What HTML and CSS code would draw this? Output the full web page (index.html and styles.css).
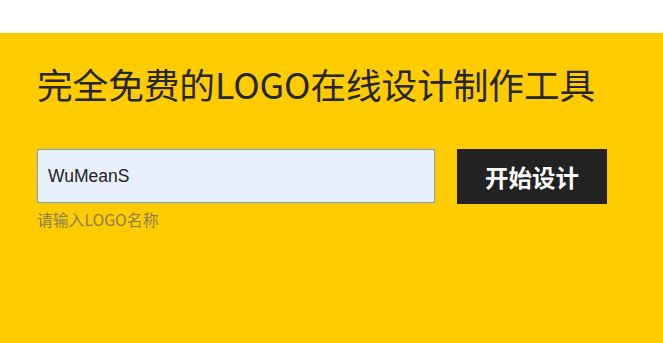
FILE: index.html
```html
<!DOCTYPE html>
<html lang="zh-CN">
<head>
<meta charset="utf-8">
<title>LOGO设计</title>
<link rel="stylesheet" href="styles.css">
</head>
<body>
<div class="topbar"></div>
<section class="hero">
  <h1 class="title">完全免费的LOGO在线设计制作工具</h1>
  <div class="form-row">
    <div class="field">
      <input class="name-input" type="text" value="WuMeanS">
      <div class="hint">请输入LOGO名称</div>
    </div>
    <button class="start-btn" type="button">开始设计</button>
  </div>
</section>
</body>
</html>
```

FILE: styles.css
```css
html, body {
  margin: 0;
  padding: 0;
  background: #ffffff;
  font-family: "Noto Sans CJK SC", "Noto Sans", sans-serif;
}
.topbar {
  height: 33px;
  background: #ffffff;
}
.hero {
  background: #ffcc00;
  height: 310px;
  padding: 29px 0 0 37px;
  box-sizing: border-box;
}
.title {
  margin: 0;
  font-size: 35.7px;
  line-height: 43px;
  font-weight: 400;
  color: #262626;
  letter-spacing: -0.1px;
}
.form-row {
  display: flex;
  align-items: flex-start;
  margin-top: 44px;
  gap: 22px;
}
.field {
  display: flex;
  flex-direction: column;
}
.name-input {
  width: 398px;
  height: 54px;
  box-sizing: border-box;
  border: 1px solid #7f9ccb;
  background: #e8f0fe;
  padding: 0 10px;
  margin: 0;
  font-family: "Liberation Sans", Arial, sans-serif;
  font-size: 17.5px;
  color: #222222;
  outline: none;
}
.hint {
  margin-top: 7px;
  font-size: 15.8px;
  line-height: 19px;
  color: #8a7d55;
}
.start-btn {
  width: 150px;
  height: 55px;
  border: none;
  margin: 0;
  background: #222222;
  color: #ffffff;
  font-family: "Noto Sans CJK SC", sans-serif;
  font-size: 23.5px;
  font-weight: 700;
  cursor: pointer;
}
```
